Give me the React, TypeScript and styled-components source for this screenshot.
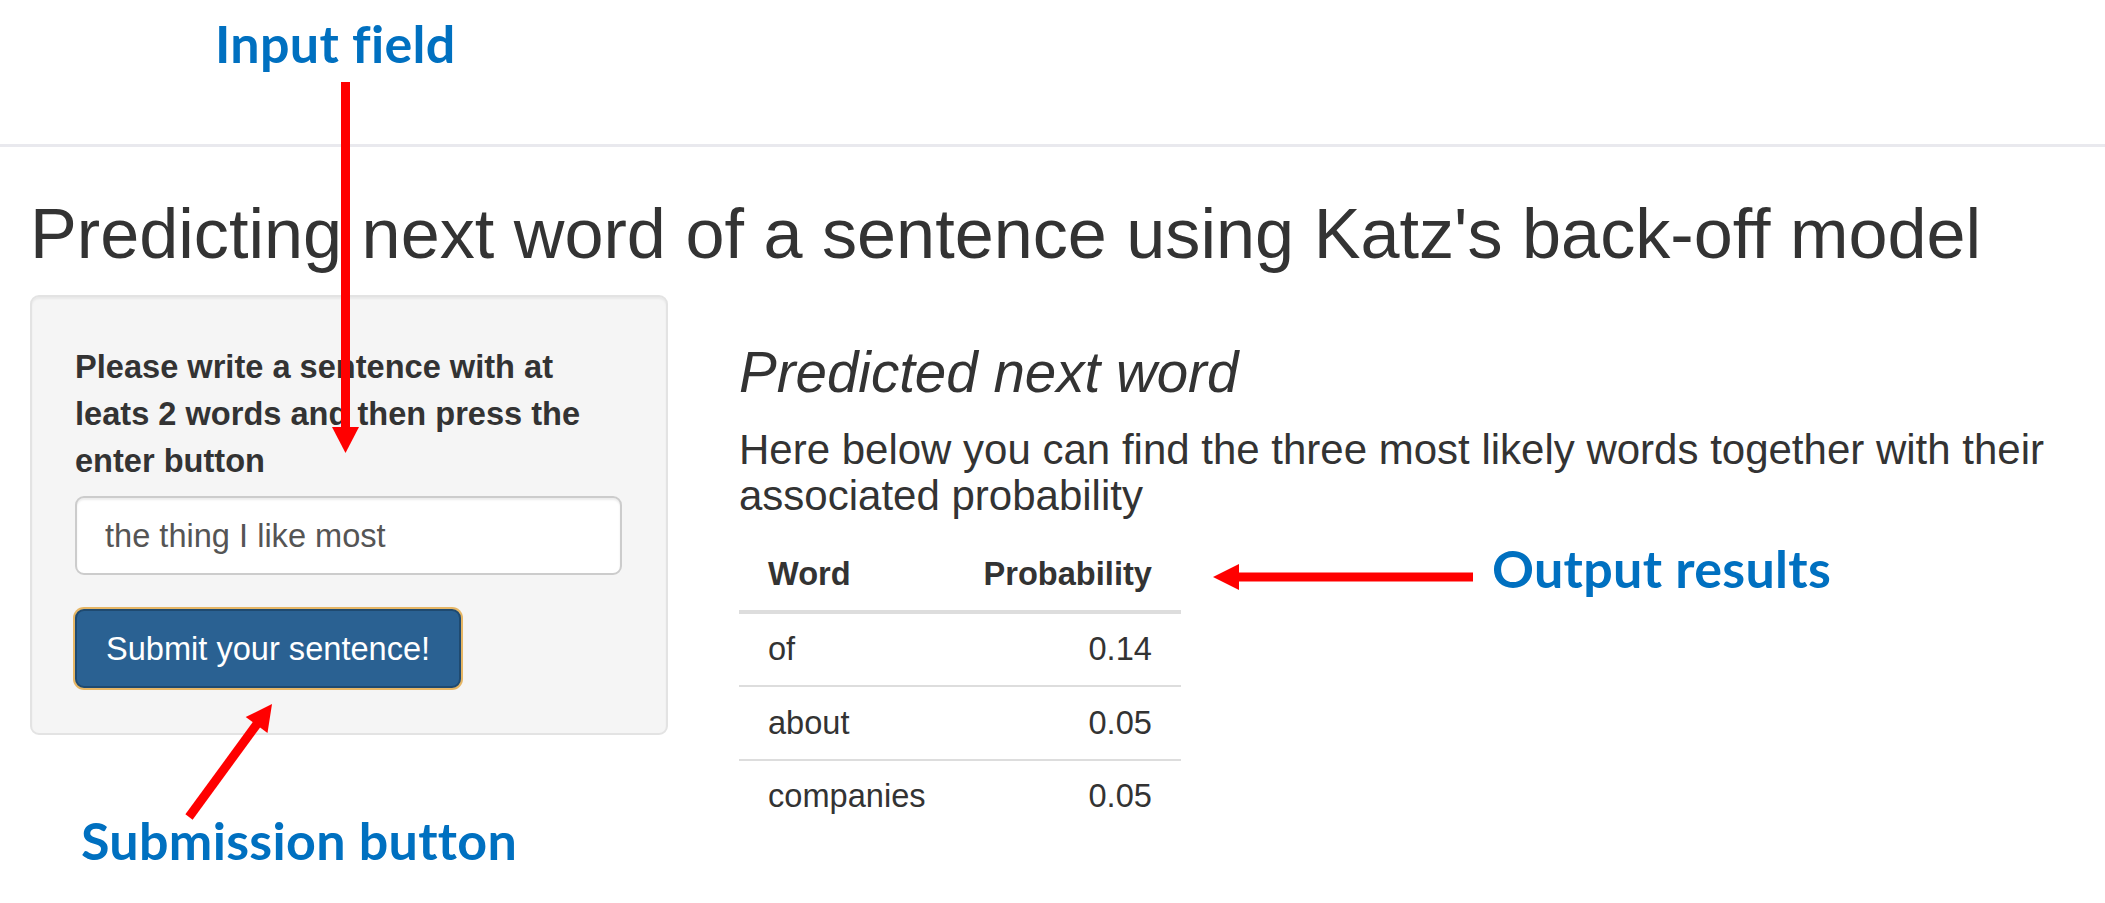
import React from "react";
import styled, { createGlobalStyle } from "styled-components";

const GlobalStyle = createGlobalStyle`
  html, body {
    margin: 0;
    padding: 0;
    background: #ffffff;
    overflow: hidden;
  }
  * { box-sizing: border-box; }
  body {
    font-family: "Liberation Sans", Arial, Helvetica, sans-serif;
    color: #333333;
  }
`;

const Page = styled.div`
  position: relative;
  width: 2105px;
  height: 903px;
  overflow: hidden;
  background: #ffffff;
`;

const TopBar = styled.div`
  height: 147px;
  border-bottom: 3px solid #e9e9ee;
`;

const Container = styled.div`
  padding: 0 35px 0 30px;
`;

const Title = styled.h2`
  margin: 48px 0 23px;
  font-size: 70.2px;
  line-height: 1.1;
  font-weight: 400;
  color: #333333;
  white-space: nowrap;
`;

const Row = styled.div`
  display: grid;
  grid-template-columns: 638px 1fr;
  column-gap: 71px;
  align-items: start;
`;

const Well = styled.div`
  background: #f5f5f5;
  border: 2px solid #e3e3e3;
  border-radius: 9px;
  box-shadow: inset 0 2px 2px rgba(0, 0, 0, 0.05);
  padding: 46px 44px 45px 43px;
`;

const FormGroup = styled.div`
  margin-bottom: 34px;
`;

const Label = styled.label`
  display: block;
  font-size: 32.6px;
  line-height: 47px;
  font-weight: 700;
  color: #333333;
  margin-bottom: 12px;
`;

const TextInput = styled.input`
  display: block;
  width: 100%;
  height: 79px;
  padding: 0 28px;
  font-family: "Liberation Sans", Arial, sans-serif;
  font-size: 32.6px;
  color: #555555;
  background: #ffffff;
  border: 2px solid #cccccc;
  border-radius: 9px;
  box-shadow: inset 0 2px 2px rgba(0, 0, 0, 0.075);
  outline: none;
`;

const SubmitButton = styled.button`
  display: inline-block;
  padding: 14px 29px;
  font-family: "Liberation Sans", Arial, sans-serif;
  font-size: 32.6px;
  line-height: 47px;
  color: #ffffff;
  background: #2a6192;
  border: 2px solid #1f4a70;
  border-radius: 9px;
  box-shadow: 0 0 0 2px #e6b665;
  cursor: pointer;
`;

const Main = styled.div`
  min-width: 0;
`;

const SubTitle = styled.h3`
  margin: 47px 0 23px;
  font-size: 56.5px;
  line-height: 1.1;
  font-style: italic;
  font-weight: 400;
  color: #333333;
`;

const Lead = styled.h4`
  margin: 0 0 20px;
  font-size: 42px;
  line-height: 1.08;
  font-weight: 400;
  color: #333333;
`;

const ResultTable = styled.table`
  border-collapse: collapse;
  font-size: 32.6px;
  line-height: 46.6px;
  color: #333333;
`;

const HeadCell = styled.th<{ $align: "left" | "right" }>`
  padding: 12.5px 29px;
  text-align: ${(p) => p.$align};
  font-weight: 700;
  vertical-align: bottom;
  border-bottom: 4.6px solid #dddddd;
`;

const BodyRow = styled.tr`
  & + & > td {
    border-top: 2.3px solid #dddddd;
  }
`;

const Cell = styled.td<{ $align: "left" | "right" }>`
  padding: 12.5px 29px;
  text-align: ${(p) => p.$align};
`;

const Overlay = styled.svg`
  position: absolute;
  inset: 0;
  width: 2105px;
  height: 903px;
  pointer-events: none;
`;

const Callout = styled.div<{ $left: number; $top: number }>`
  position: absolute;
  left: ${(p) => p.$left}px;
  top: ${(p) => p.$top}px;
  font-family: "Lato", "Open Sans", sans-serif;
  font-weight: 700;
  font-size: 52px;
  letter-spacing: 0.3px;
  line-height: 1;
  color: #0070c0;
  white-space: nowrap;
`;

const rows = [
  { word: "of", prob: "0.14" },
  { word: "about", prob: "0.05" },
  { word: "companies", prob: "0.05" },
];

export default function App() {
  return (
    <Page>
      <GlobalStyle />
      <TopBar />
      <Container>
        <Title>Predicting next word of a sentence using Katz's back-off model</Title>
        <Row>
          <Well>
            <FormGroup>
              <Label htmlFor="sentence">
                Please write a sentence with at leats 2 words and then press the enter button
              </Label>
              <TextInput id="sentence" type="text" defaultValue="the thing I like most" />
            </FormGroup>
            <SubmitButton type="button">Submit your sentence!</SubmitButton>
          </Well>
          <Main>
            <SubTitle>Predicted next word</SubTitle>
            <Lead>
              Here below you can find the three most likely words together with their associated probability
            </Lead>
            <ResultTable>
              <thead>
                <tr>
                  <HeadCell $align="left">Word</HeadCell>
                  <HeadCell $align="right">Probability</HeadCell>
                </tr>
              </thead>
              <tbody>
                {rows.map((r) => (
                  <BodyRow key={r.word}>
                    <Cell $align="left">{r.word}</Cell>
                    <Cell $align="right">{r.prob}</Cell>
                  </BodyRow>
                ))}
              </tbody>
            </ResultTable>
          </Main>
        </Row>
      </Container>

      <Overlay viewBox="0 0 2105 903">
        <g fill="#ff0000" stroke="none">
          <rect x="341" y="82" width="9" height="346" />
          <polygon points="332,427 359,427 345.5,453" />
          <rect x="1238" y="572.5" width="235" height="9" />
          <polygon points="1239,564 1239,590 1213,577" />
          <polygon points="267.5,733 245.7,717 272,704" />
        </g>
        <line x1="189" y1="817" x2="257" y2="724" stroke="#ff0000" strokeWidth="9" />
      </Overlay>
      <Callout $left={215} $top={17}>Input field</Callout>
      <Callout $left={1492} $top={542}>Output results</Callout>
      <Callout $left={81} $top={814}>Submission button</Callout>
    </Page>
  );
}
